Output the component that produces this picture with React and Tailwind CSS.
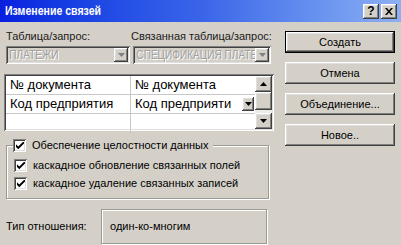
import React from 'react';

const raised =
  'bg-[#d4d0c8] shadow-[inset_-1px_-1px_#404040,inset_1px_1px_#ffffff,inset_-2px_-2px_#808080,inset_2px_2px_#dfdfdf]';
const sunken =
  'shadow-[inset_1px_1px_#808080,inset_-1px_-1px_#ffffff,inset_2px_2px_#404040,inset_-2px_-2px_#dfdfdf]';

function Arrow({ up, gray }) {
  return (
    <svg width="7" height="4" viewBox="0 0 7 4">
      <path d={up ? 'M3.5 0 L7 4 L0 4 Z' : 'M0 0 L7 0 L3.5 4 Z'} fill={gray ? '#808080' : '#000'} />
    </svg>
  );
}

function Combo({ text, width }) {
  return (
    <div className={`relative flex h-[18px] items-center ${sunken} ${width}`}>
      <span className="inline-block origin-left scale-x-[0.84] whitespace-nowrap pl-[4px] text-[12px] leading-none text-[#a0a0a0] [text-shadow:1px_1px_#ffffff]">
        {text}
      </span>
      <div className={`absolute right-[2px] top-[2px] flex h-[14px] w-[14px] items-center justify-center ${raised}`}>
        <Arrow gray />
      </div>
    </div>
  );
}

function Check({ label }) {
  return (
    <div className="flex items-center gap-[6px] whitespace-nowrap text-[11px] leading-[13px]">
      <span className={`flex h-[13px] w-[13px] items-center justify-center bg-white ${sunken}`}>
        <svg width="8" height="8" viewBox="0 0 7 7">
          <path d="M0 2 L0 4.3 L2 6.3 L7 1.3 L7 -1 L2 4 Z" fill="#000" />
        </svg>
      </span>
      <span>{label}</span>
    </div>
  );
}

function Button({ children, isDefault }) {
  return (
    <div className={`h-[22px] w-[110px] ${isDefault ? 'border border-black' : ''}`}>
      <div className={`flex h-full w-full items-center justify-center text-[11px] ${raised}`}>{children}</div>
    </div>
  );
}

export default function App() {
  return (
    <div className="h-[245px] w-[401px] overflow-hidden bg-[#d4d0c8] font-['Liberation_Sans',Arial,sans-serif] text-[13px] text-black">
      {/* Title bar */}
      <div className="flex h-[22px] items-center justify-between bg-gradient-to-r from-[#0a1ee0] via-[#3a64e8] to-[#8cb0f2] pl-[5px] pr-[4px]">
        <span className="inline-block origin-left scale-x-[0.88] whitespace-nowrap text-[12px] font-bold text-white">Изменение связей</span>
        <div className="flex gap-[2px]">
          <div className={`flex h-[15px] w-[16px] items-center justify-center text-[12px] font-bold leading-none ${raised}`}>?</div>
          <div className={`flex h-[15px] w-[16px] items-center justify-center ${raised}`}>
            <svg width="8" height="7" viewBox="0 0 8 7">
              <path d="M0 0 L2 0 L4 2.5 L6 0 L8 0 L5 3.5 L8 7 L6 7 L4 4.5 L2 7 L0 7 L3 3.5 Z" fill="#000" />
            </svg>
          </div>
        </div>
      </div>

      <div className="flex">
        {/* Left column */}
        <div className="w-[280px] pl-[4px]">
          <div className="mt-[8px] flex whitespace-nowrap text-[11px] leading-[13px] text-[#202020]">
            <span className="w-[127px] pl-[2px]">Таблица/запрос:</span>
            <span>Связанная таблица/запрос:</span>
          </div>
          <div className="mt-[3px] flex gap-[3px] pl-[2px]">
            <Combo text="ПЛАТЕЖИ" width="w-[124px]" />
            <Combo text="СПЕЦИФИКАЦИЯ ПЛАТЕ" width="w-[138px]" />
          </div>

          {/* Fields grid */}
          <div className={`mt-[10px] flex h-[57px] w-[270px] bg-white p-[2px] ${sunken}`}>
            <div className="flex-1">
              {[
                ['№ документа', '№ документа', false],
                ['Код предприятия', 'Код предприяти', true],
                ['', '', false],
              ].map(([a, b, drop], i) => (
                <div key={i} className={`flex h-[19px] ${i < 2 ? 'border-b border-[#c8c8c8]' : ''}`}>
                  <div className="w-[125px] whitespace-nowrap border-r border-[#c8c8c8] pl-[4px] leading-[18px]">{a}</div>
                  <div className="relative flex-1 whitespace-nowrap pl-[4px] leading-[18px]">
                    {b}
                    {drop && (
                      <div className={`absolute right-[1px] top-[2px] flex h-[14px] w-[12px] items-center justify-center ${raised}`}>
                        <Arrow />
                      </div>
                    )}
                  </div>
                </div>
              ))}
            </div>
            <div className="flex w-[17px] flex-col">
              <div className={`flex h-[16px] items-center justify-center ${raised}`}>
                <Arrow up />
              </div>
              <div className={`h-[18px] ${raised}`} />
              <div className="flex-1 bg-[#ecebe6]" />
              <div className={`flex h-[16px] items-center justify-center ${raised}`}>
                <Arrow />
              </div>
            </div>
          </div>

          {/* Integrity group */}
          <div className="relative ml-[2px] mt-[14px] h-[54px] w-[263px] border border-[#9c9a94] shadow-[1px_1px_#ffffff,inset_1px_1px_#ffffff]">
            <div className="absolute -top-[7px] left-[6px] bg-[#d4d0c8] pr-[5px]">
              <Check label="Обеспечение целостности данных" />
            </div>
            <div className="flex flex-col gap-[5px] pl-[7px] pt-[13px]">
              <Check label="каскадное обновление связанных полей" />
              <Check label="каскадное удаление связанных записей" />
            </div>
          </div>

          {/* Relationship type */}
          <div className="mt-[10px] flex items-center">
            <span className="w-[97px] whitespace-nowrap pl-[2px] text-[11px]">Тип отношения:</span>
            <div className="flex h-[35px] w-[166px] items-center border border-[#9c9a94] pl-[8px] text-[11px] shadow-[inset_1px_1px_#ffffff,1px_1px_#ffffff]">
              один-ко-многим
            </div>
          </div>
        </div>

        {/* Right column buttons */}
        <div className="flex flex-col gap-[9px] pl-[5px] pt-[9px]">
          <Button isDefault>Создать</Button>
          <Button>Отмена</Button>
          <Button>Объединение...</Button>
          <Button>Новое..</Button>
        </div>
      </div>
    </div>
  );
}
